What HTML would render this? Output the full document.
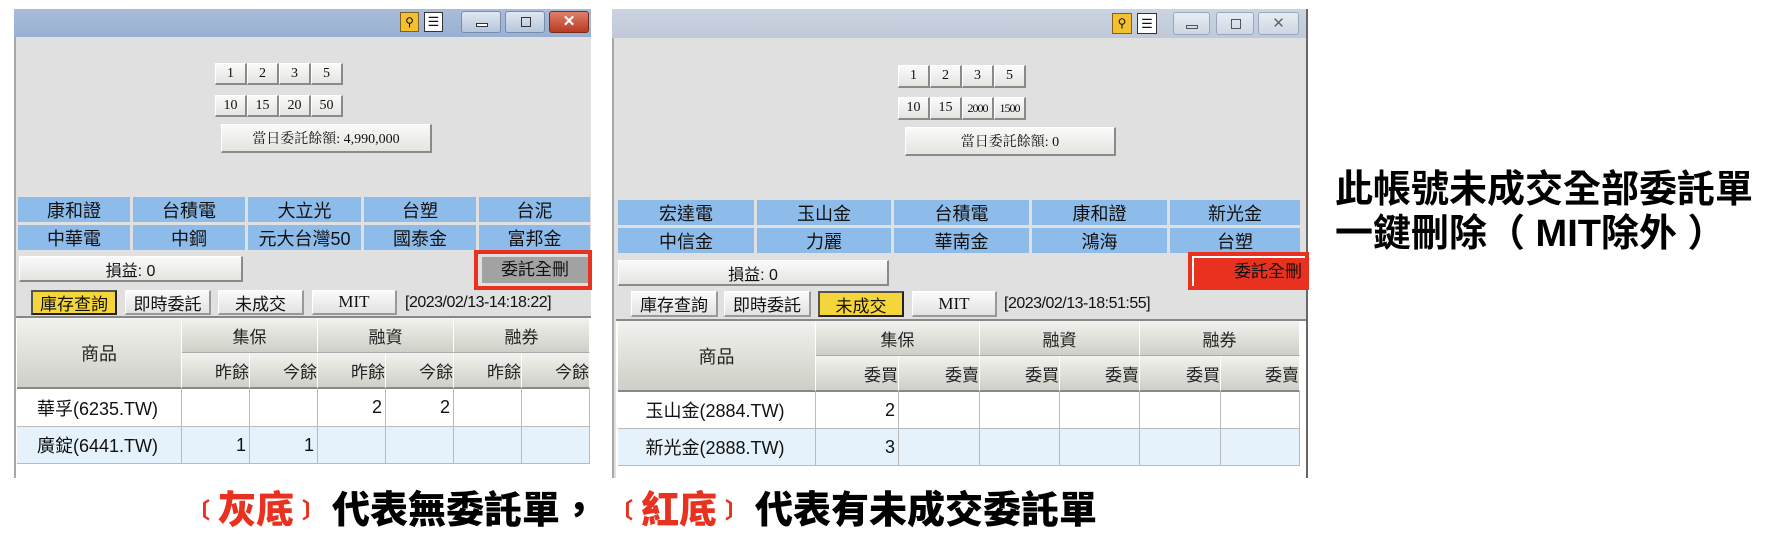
<!DOCTYPE html>
<html><head><meta charset="utf-8"><style>
*{margin:0;padding:0;box-sizing:border-box}
body{width:1774px;height:542px;background:#fff;position:relative;overflow:hidden;font-family:"Liberation Sans","Noto Sans CJK TC",sans-serif;color:#111}
.a{position:absolute}
.win{background:#e0e0e0;border-left:2px solid #a8a8a8}
.tb{background:linear-gradient(#a9bdd9,#98b0d2)}
.tb2{background:linear-gradient(#cbd4e1,#bfc9d8)}
.btn{position:absolute;background:linear-gradient(#fafafa,#e4e4e0);border:1px solid #fff;border-right:2px solid #8a8a8a;border-bottom:2px solid #8a8a8a;font-size:14px;text-align:center;font-family:"Liberation Serif","Noto Serif CJK SC",serif;display:flex;align-items:center;justify-content:center}
.cell{position:absolute;background:#8dbbea;font-size:18px;text-align:center;display:flex;align-items:center;justify-content:center}
.tab{position:absolute;background:linear-gradient(#fbfbfb,#e2e2e2);border:1px solid #fff;border-right:2px solid #999;border-bottom:2px solid #999;font-size:17px;display:flex;align-items:center;justify-content:center}
.tab.y{background:#f5d63a;border:2px solid #444;border-color:#555 #222 #222 #555}
.th{position:absolute;background:linear-gradient(#f2f2ee,#cfcfc8);border-right:1px solid #fff;border-bottom:1px solid #aaa;font-size:17px;display:flex;align-items:center;justify-content:center;color:#222}
.td{position:absolute;border-right:1px solid #bbb;border-bottom:1px solid #bbb;font-size:18px;display:flex;align-items:center;justify-content:flex-end;padding-right:3px}
.wb{position:absolute;border:1px solid #7a8aa8;border-radius:3px;background:linear-gradient(#dfe7f2,#b7c6dc)}
.cap{position:absolute;top:488px;font-size:38px;font-weight:900;line-height:46px;color:#000;white-space:nowrap;font-family:'Liberation Sans','Noto Sans CJK TC',sans-serif}
.br{color:#e8321f;font-size:22px;vertical-align:5px;margin:0 8px}
</style></head><body>

<!-- LEFT WINDOW -->
<div class="a win" style="left:14px;top:9px;width:577px;height:469px"></div>
<div class="a tb" style="left:14px;top:9px;width:577px;height:28px"></div>
<div class="a" style="left:400px;top:12px;width:19px;height:20px;background:#f5c030;border:1px solid #806020;font-size:12px;text-align:center;line-height:18px">⚲</div>
<div class="a" style="left:424px;top:12px;width:19px;height:20px;background:#fff;border:1px solid #333;font-size:13px;text-align:center;line-height:18px">☰</div>
<div class="wb" style="left:461px;top:11px;width:40px;height:22px"><div class="a" style="left:14px;top:11px;width:12px;height:4px;border:1px solid #333;background:#fff"></div></div>
<div class="wb" style="left:505px;top:11px;width:40px;height:22px"><div class="a" style="left:15px;top:5px;width:10px;height:10px;border:1px solid #333"></div></div>
<div class="wb" style="left:549px;top:11px;width:40px;height:22px;background:linear-gradient(#e0806a,#b83a22);border-color:#7a2a1a;color:#fff;font-weight:bold;font-size:15px;text-align:center;line-height:20px">✕</div>

<div class="btn" style="left:215px;top:63px;width:32px;height:22px">1</div>
<div class="btn" style="left:247px;top:63px;width:32px;height:22px">2</div>
<div class="btn" style="left:279px;top:63px;width:32px;height:22px">3</div>
<div class="btn" style="left:311px;top:63px;width:32px;height:22px">5</div>
<div class="btn" style="left:215px;top:95px;width:32px;height:22px">10</div>
<div class="btn" style="left:247px;top:95px;width:32px;height:22px">15</div>
<div class="btn" style="left:279px;top:95px;width:32px;height:22px">20</div>
<div class="btn" style="left:311px;top:95px;width:32px;height:22px">50</div>
<div class="btn" style="left:221px;top:124px;width:211px;height:29px;font-size:14px">當日委託餘額: 4,990,000</div>

<div class="cell" style="left:18px;top:197px;width:112px;height:25px">康和證</div>
<div class="cell" style="left:133px;top:197px;width:112px;height:25px">台積電</div>
<div class="cell" style="left:248px;top:197px;width:113px;height:25px">大立光</div>
<div class="cell" style="left:364px;top:197px;width:112px;height:25px">台塑</div>
<div class="cell" style="left:479px;top:197px;width:111px;height:25px">台泥</div>
<div class="cell" style="left:18px;top:225px;width:112px;height:25px">中華電</div>
<div class="cell" style="left:133px;top:225px;width:112px;height:25px">中鋼</div>
<div class="cell" style="left:248px;top:225px;width:113px;height:25px">元大台灣50</div>
<div class="cell" style="left:364px;top:225px;width:112px;height:25px">國泰金</div>
<div class="cell" style="left:479px;top:225px;width:111px;height:25px">富邦金</div>

<div class="btn" style="left:19px;top:256px;width:224px;height:26px;font-size:16px;font-family:'Liberation Sans','Noto Sans CJK TC',sans-serif">損益: 0</div>
<div class="a" style="left:474px;top:250px;width:118px;height:40px;border:4px solid #e8321f"></div>
<div class="a" style="left:482px;top:256px;width:106px;height:27px;background:#a2a2a2;border-top:1px solid #ddd;font-size:17px;text-align:center;line-height:26px">委託全刪</div>

<div class="tab y" style="left:31px;top:290px;width:86px;height:25px">庫存查詢</div>
<div class="tab" style="left:125px;top:290px;width:86px;height:25px">即時委託</div>
<div class="tab" style="left:218px;top:290px;width:86px;height:25px">未成交</div>
<div class="tab" style="left:312px;top:290px;width:85px;height:25px;font-family:'Liberation Serif',serif">MIT</div>
<div class="a" style="left:405px;top:290px;font-size:16px;line-height:25px;letter-spacing:-0.5px">[2023/02/13-14:18:22]</div>

<div class="a" style="left:16px;top:316px;width:575px;height:162px;background:#fff;border-top:2px solid #888"></div>
<div class="th" style="left:17px;top:318px;width:165px;height:71px;font-size:18px;border-bottom:2px solid #888">商品</div>
<div class="th" style="left:182px;top:318px;width:136px;height:35px">集保</div>
<div class="th" style="left:318px;top:318px;width:136px;height:35px">融資</div>
<div class="th" style="left:454px;top:318px;width:136px;height:35px">融券</div>
<div class="th" style="left:182px;top:353px;width:68px;height:36px;justify-content:flex-end;border-bottom:2px solid #888">昨餘</div>
<div class="th" style="left:250px;top:353px;width:68px;height:36px;justify-content:flex-end;border-bottom:2px solid #888">今餘</div>
<div class="th" style="left:318px;top:353px;width:68px;height:36px;justify-content:flex-end;border-bottom:2px solid #888">昨餘</div>
<div class="th" style="left:386px;top:353px;width:68px;height:36px;justify-content:flex-end;border-bottom:2px solid #888">今餘</div>
<div class="th" style="left:454px;top:353px;width:68px;height:36px;justify-content:flex-end;border-bottom:2px solid #888">昨餘</div>
<div class="th" style="left:522px;top:353px;width:68px;height:36px;justify-content:flex-end;border-bottom:2px solid #888">今餘</div>

<div class="td" style="left:17px;top:389px;width:165px;height:38px;justify-content:center">華孚(6235.TW)</div>
<div class="td" style="left:182px;top:389px;width:68px;height:38px"></div>
<div class="td" style="left:250px;top:389px;width:68px;height:38px"></div>
<div class="td" style="left:318px;top:389px;width:68px;height:38px">2</div>
<div class="td" style="left:386px;top:389px;width:68px;height:38px">2</div>
<div class="td" style="left:454px;top:389px;width:68px;height:38px"></div>
<div class="td" style="left:522px;top:389px;width:68px;height:38px"></div>
<div class="td" style="left:17px;top:427px;width:165px;height:37px;justify-content:center;background:#e5f2fc">廣錠(6441.TW)</div>
<div class="td" style="left:182px;top:427px;width:68px;height:37px;background:#e5f2fc">1</div>
<div class="td" style="left:250px;top:427px;width:68px;height:37px;background:#e5f2fc">1</div>
<div class="td" style="left:318px;top:427px;width:68px;height:37px;background:#e5f2fc"></div>
<div class="td" style="left:386px;top:427px;width:68px;height:37px;background:#e5f2fc"></div>
<div class="td" style="left:454px;top:427px;width:68px;height:37px;background:#e5f2fc"></div>
<div class="td" style="left:522px;top:427px;width:68px;height:37px;background:#e5f2fc"></div>

<!-- RIGHT WINDOW -->
<div class="a win" style="left:612px;top:9px;width:696px;height:469px;border-right:2px solid #666"></div>
<div class="a tb2" style="left:612px;top:9px;width:694px;height:29px"></div>
<div class="a" style="left:1112px;top:13px;width:20px;height:21px;background:#f5c030;border:1px solid #806020;font-size:12px;text-align:center;line-height:19px">⚲</div>
<div class="a" style="left:1137px;top:13px;width:20px;height:21px;background:#fff;border:1px solid #333;font-size:13px;text-align:center;line-height:19px">☰</div>
<div class="wb" style="left:1173px;top:12px;width:37px;height:23px;background:linear-gradient(#e8edf4,#cdd6e3);border-color:#9aa6ba"><div class="a" style="left:12px;top:12px;width:12px;height:4px;border:1px solid #555"></div></div>
<div class="wb" style="left:1216px;top:12px;width:38px;height:23px;background:linear-gradient(#e8edf4,#cdd6e3);border-color:#9aa6ba"><div class="a" style="left:14px;top:6px;width:10px;height:10px;border:1px solid #555"></div></div>
<div class="wb" style="left:1258px;top:12px;width:41px;height:23px;background:linear-gradient(#e8edf4,#cdd6e3);border-color:#9aa6ba;color:#666;font-size:15px;text-align:center;line-height:21px">✕</div>

<div class="btn" style="left:898px;top:65px;width:32px;height:23px">1</div>
<div class="btn" style="left:930px;top:65px;width:32px;height:23px">2</div>
<div class="btn" style="left:962px;top:65px;width:32px;height:23px">3</div>
<div class="btn" style="left:994px;top:65px;width:32px;height:23px">5</div>
<div class="btn" style="left:898px;top:97px;width:32px;height:23px">10</div>
<div class="btn" style="left:930px;top:97px;width:32px;height:23px">15</div>
<div class="btn" style="left:962px;top:97px;width:32px;height:23px;font-size:12px;letter-spacing:-1px">2000</div>
<div class="btn" style="left:994px;top:97px;width:32px;height:23px;font-size:12px;letter-spacing:-1px">1500</div>
<div class="btn" style="left:905px;top:127px;width:211px;height:29px">當日委託餘額: 0</div>

<div class="cell" style="left:618px;top:200px;width:136px;height:25px">宏達電</div>
<div class="cell" style="left:757px;top:200px;width:134px;height:25px">玉山金</div>
<div class="cell" style="left:894px;top:200px;width:135px;height:25px">台積電</div>
<div class="cell" style="left:1032px;top:200px;width:135px;height:25px">康和證</div>
<div class="cell" style="left:1170px;top:200px;width:130px;height:25px">新光金</div>
<div class="cell" style="left:618px;top:228px;width:136px;height:25px">中信金</div>
<div class="cell" style="left:757px;top:228px;width:134px;height:25px">力麗</div>
<div class="cell" style="left:894px;top:228px;width:135px;height:25px">華南金</div>
<div class="cell" style="left:1032px;top:228px;width:135px;height:25px">鴻海</div>
<div class="cell" style="left:1170px;top:228px;width:130px;height:25px">台塑</div>

<div class="btn" style="left:618px;top:260px;width:271px;height:26px;font-size:16px;font-family:'Liberation Sans','Noto Sans CJK TC',sans-serif">損益: 0</div>
<div class="a" style="left:1188px;top:252px;width:121px;height:38px;border:4px solid #e8321f;background:#e8321f"></div>
<div class="a" style="left:1192px;top:256px;width:113px;height:30px;background:#e8321f;border-left:2px solid #fff;border-top:2px solid #fff;font-size:17px;text-align:right;padding-right:3px;line-height:27px">委託全刪</div>

<div class="tab" style="left:631px;top:291px;width:87px;height:26px">庫存查詢</div>
<div class="tab" style="left:724px;top:291px;width:87px;height:26px">即時委託</div>
<div class="tab y" style="left:818px;top:291px;width:86px;height:26px">未成交</div>
<div class="tab" style="left:912px;top:291px;width:85px;height:26px;font-family:'Liberation Serif',serif">MIT</div>
<div class="a" style="left:1004px;top:291px;font-size:16px;line-height:26px;letter-spacing:-0.5px">[2023/02/13-18:51:55]</div>

<div class="a" style="left:616px;top:319px;width:690px;height:159px;background:#fff;border-top:2px solid #888"></div>
<div class="th" style="left:618px;top:321px;width:198px;height:71px;font-size:18px;border-bottom:2px solid #888">商品</div>
<div class="th" style="left:816px;top:321px;width:164px;height:35px">集保</div>
<div class="th" style="left:980px;top:321px;width:160px;height:35px">融資</div>
<div class="th" style="left:1140px;top:321px;width:160px;height:35px">融券</div>
<div class="th" style="left:816px;top:356px;width:83px;height:36px;justify-content:flex-end;border-bottom:2px solid #888">委買</div>
<div class="th" style="left:899px;top:356px;width:81px;height:36px;justify-content:flex-end;border-bottom:2px solid #888">委賣</div>
<div class="th" style="left:980px;top:356px;width:80px;height:36px;justify-content:flex-end;border-bottom:2px solid #888">委買</div>
<div class="th" style="left:1060px;top:356px;width:80px;height:36px;justify-content:flex-end;border-bottom:2px solid #888">委賣</div>
<div class="th" style="left:1140px;top:356px;width:81px;height:36px;justify-content:flex-end;border-bottom:2px solid #888">委買</div>
<div class="th" style="left:1221px;top:356px;width:79px;height:36px;justify-content:flex-end;border-bottom:2px solid #888">委賣</div>

<div class="td" style="left:618px;top:392px;width:198px;height:37px;justify-content:center">玉山金(2884.TW)</div>
<div class="td" style="left:816px;top:392px;width:83px;height:37px">2</div>
<div class="td" style="left:899px;top:392px;width:81px;height:37px"></div>
<div class="td" style="left:980px;top:392px;width:80px;height:37px"></div>
<div class="td" style="left:1060px;top:392px;width:80px;height:37px"></div>
<div class="td" style="left:1140px;top:392px;width:81px;height:37px"></div>
<div class="td" style="left:1221px;top:392px;width:79px;height:37px"></div>
<div class="td" style="left:618px;top:429px;width:198px;height:37px;justify-content:center;background:#e5f2fc">新光金(2888.TW)</div>
<div class="td" style="left:816px;top:429px;width:83px;height:37px;background:#e5f2fc">3</div>
<div class="td" style="left:899px;top:429px;width:81px;height:37px;background:#e5f2fc"></div>
<div class="td" style="left:980px;top:429px;width:80px;height:37px;background:#e5f2fc"></div>
<div class="td" style="left:1060px;top:429px;width:80px;height:37px;background:#e5f2fc"></div>
<div class="td" style="left:1140px;top:429px;width:81px;height:37px;background:#e5f2fc"></div>
<div class="td" style="left:1221px;top:429px;width:79px;height:37px;background:#e5f2fc"></div>

<!-- Right annotation -->
<div class="a" style="left:1335px;top:168px;font-size:38px;font-weight:bold;line-height:44px;color:#000;font-family:'Liberation Sans','Noto Sans CJK TC',sans-serif;white-space:nowrap">此帳號未成交全部委託單<br>一鍵刪除（ MIT除外 ）</div>

<!-- Bottom caption -->
<div class="cap" style="left:180px"><span class="br">〔</span><span style="color:#e8321f">灰底</span><span class="br">〕</span>代表無委託單，</div>
<div class="cap" style="left:603px"><span class="br">〔</span><span style="color:#e8321f">紅底</span><span class="br">〕</span>代表有未成交委託單</div>

</body></html>
